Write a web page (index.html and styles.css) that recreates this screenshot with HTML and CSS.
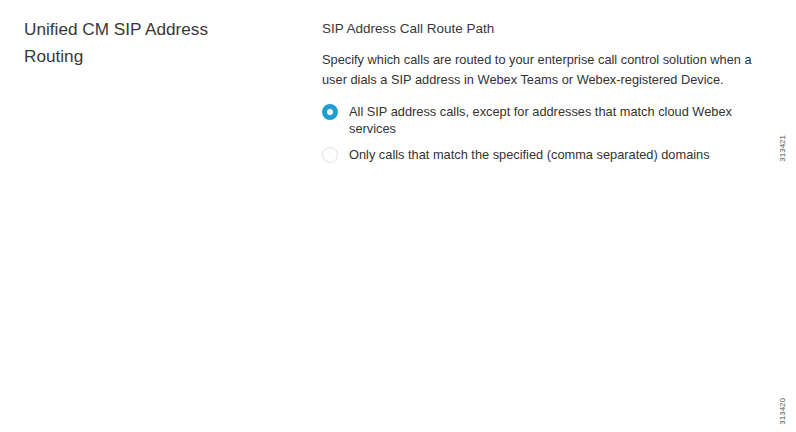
FILE: index.html
```html
<!DOCTYPE html>
<html lang="en">
<head>
    <meta charset="UTF-8">
    <title>Unified CM SIP Address Routing</title>
    <link rel="stylesheet" href="styles.css">
</head>
<body>

<div class="page">
    <div class="section-name">Unified CM SIP Address Routing</div>
    <div class="settings">
        <h2>SIP Address Call Route Path</h2>
        <p class="desc">Specify which calls are routed to your enterprise call control solution when a user dials a SIP address in Webex Teams or Webex-registered Device.</p>
        <label class="option">
            <span class="radio checked"></span>
            <span class="option-text">All SIP address calls, except for addresses that match cloud Webex services</span>
        </label>
        <label class="option">
            <span class="radio"></span>
            <span class="option-text">Only calls that match the specified (comma separated) domains</span>
        </label>
    </div>
    <div class="fig-ids">
        <span class="fig-id">313421</span>
        <span class="fig-id">313420</span>
    </div>
</div>

</body>
</html>
```

FILE: styles.css
```css
body {
    margin: 0;
    background: #fff;
    font-family: "Liberation Sans", Arial, sans-serif;
    color: #333;
}
.page {
    display: flex;
    height: 432px;
    padding: 0 0 0 24px;
    box-sizing: border-box;
}
.section-name {
    width: 200px;
    margin-top: 16px;
    font-size: 17.2px;
    line-height: 27px;
    color: #383838;
}
.settings {
    width: 435px;
    margin-left: 98px;
    padding-top: 20px;
}
h2 {
    margin: 0 0 12px;
    font-size: 13.5px;
    font-weight: normal;
    line-height: 18px;
    color: #383838;
}
.desc {
    margin: 0 0 13px;
    font-size: 12.8px;
    line-height: 20px;
}
.option {
    display: flex;
    align-items: flex-start;
    margin-bottom: 9px;
    font-size: 12.8px;
    line-height: 17px;
}
.radio {
    flex: none;
    width: 16px;
    height: 16px;
    margin: 1px 11px 0 0;
    border-radius: 50%;
    border: 1px solid #e0e0e0;
    box-sizing: border-box;
}
.radio.checked {
    border: 5px solid #1e9fcf;
}
.fig-ids {
    flex: 1;
    display: flex;
    flex-direction: column;
    align-items: flex-end;
    padding-right: 9px;
}
.fig-id {
    writing-mode: vertical-rl;
    transform: rotate(180deg);
    font-size: 8px;
    color: #555;
}
.fig-id:first-child {
    margin-top: 135px;
}
.fig-id:last-child {
    margin-top: auto;
    margin-bottom: 7px;
}
```
